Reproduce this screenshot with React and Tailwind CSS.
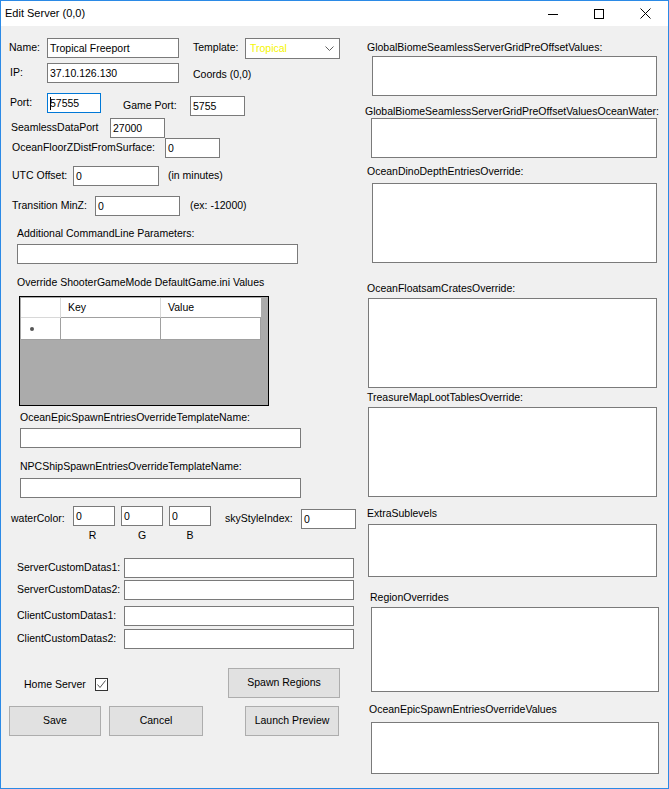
import React from "react";

// Simple label used next to the inputs
function Label({ className = "", children }) {
  return (
    <div className={"h-[20px] flex items-center whitespace-nowrap shrink-0 " + className}>
      {children}
    </div>
  );
}

function TextBox({ className = "", value = "", focused = false }) {
  return (
    <div
      className={
        "h-[20px] bg-white flex items-center pl-[2px] shrink-0 border " +
        (focused ? "border-[#0078d7] " : "border-[#7a7a7a] ") +
        className
      }
    >
      {focused && <span className="inline-block w-[1px] h-[13px] bg-black -mr-[1px]" />}
      <span className="leading-[14px]">{value}</span>
    </div>
  );
}

function Area({ className = "" }) {
  return <div className={"bg-white border border-[#7a7a7a] shrink-0 " + className} />;
}

function Button({ className = "", children }) {
  return (
    <div
      className={
        "h-[30px] bg-[#e1e1e1] border border-[#adadad] flex items-center justify-center shrink-0 " +
        className
      }
    >
      {children}
    </div>
  );
}

function TitleBar() {
  return (
    <div className="h-[25px] bg-white flex items-center shrink-0">
      <div className="pl-[4px] text-[11px] text-black flex-1">Edit Server (0,0)</div>
      <div className="w-[46px] h-full flex items-center justify-center">
        <svg width="10" height="10" viewBox="0 0 10 10">
          <line x1="0" y1="5.5" x2="10" y2="5.5" stroke="#000" strokeWidth="1" />
        </svg>
      </div>
      <div className="w-[46px] h-full flex items-center justify-center">
        <svg width="10" height="10" viewBox="0 0 10 10">
          <rect x="0.5" y="0.5" width="9" height="9" fill="none" stroke="#000" strokeWidth="1" />
        </svg>
      </div>
      <div className="w-[46px] h-full flex items-center justify-center">
        <svg width="11" height="11" viewBox="0 0 11 11">
          <path d="M0.5 0.5 L10.5 10.5 M10.5 0.5 L0.5 10.5" stroke="#000" strokeWidth="1" />
        </svg>
      </div>
    </div>
  );
}

function KeyValueGrid() {
  return (
    <div className="ml-[18px] mt-[7px] w-[250px] h-[110px] border border-black bg-[#ababab] p-[1px] shrink-0">
      {/* header */}
      <div className="flex h-[20px]">
        <div className="w-[40px] bg-white border-r border-b border-[#d8d8d8]" />
        <div className="w-[100px] bg-white border-r border-b border-[#d8d8d8] border-b-[#a0a0a0] flex items-center pl-[7px]">
          Key
        </div>
        <div className="w-[100px] bg-white border-b border-[#a0a0a0] flex items-center pl-[7px]">
          Value
        </div>
      </div>
      {/* new row */}
      <div className="flex h-[22px]">
        <div className="w-[40px] bg-white border-r border-b border-[#a0a0a0] flex items-center pl-[9px]">
          <span className="inline-block w-[4px] h-[4px] rounded-full bg-[#555]" />
        </div>
        <div className="w-[100px] bg-white border-r border-b border-[#a0a0a0]" />
        <div className="w-[100px] bg-white border-r border-b border-[#a0a0a0]" />
      </div>
    </div>
  );
}

function LeftColumn() {
  return (
    <div className="w-[359px] flex flex-col shrink-0">
      {/* Name / Template */}
      <div className="flex items-start mt-[12px] h-[21px]">
        <Label className="ml-[8px] w-[38px]">Name:</Label>
        <TextBox className="w-[132px]" value="Tropical Freeport" />
        <Label className="ml-[14px] w-[52px]">Template:</Label>
        <div className="w-[95px] h-[21px] bg-white border border-[#7a7a7a] flex items-center pl-[4px] pr-[5px]">
          <span className="flex-1 text-[#f5f500]">Tropical</span>
          <svg width="9" height="5" viewBox="0 0 9 5">
            <path d="M0.5 0.5 L4.5 4.5 L8.5 0.5" fill="none" stroke="#606060" strokeWidth="1" />
          </svg>
        </div>
      </div>

      {/* IP */}
      <div className="flex items-start mt-[4px] h-[22px]">
        <Label className="ml-[9px] w-[37px]">IP:</Label>
        <TextBox className="w-[132px]" value="37.10.126.130" />
        <Label className="ml-[14px] mt-[2px]">Coords (0,0)</Label>
      </div>

      {/* Ports */}
      <div className="flex items-start mt-[8px] h-[23px]">
        <Label className="ml-[9px] w-[37px]">Port:</Label>
        <TextBox className="w-[54px]" value="57555" focused />
        <Label className="ml-[22px] w-[67px] mt-[3px]">Game Port:</Label>
        <TextBox className="w-[55px] mt-[3px]" value="5755" />
      </div>

      <div className="flex items-start mt-[2px] h-[20px]">
        <Label className="ml-[10px] w-[99px]">SeamlessDataPort</Label>
        <TextBox className="w-[55px]" value="27000" />
      </div>

      <div className="flex items-start h-[20px]">
        <Label className="ml-[11px] w-[153px]">OceanFloorZDistFromSurface:</Label>
        <TextBox className="w-[55px]" value="0" />
      </div>

      <div className="flex items-start mt-[8px] h-[20px]">
        <Label className="ml-[11px] w-[61px]">UTC Offset:</Label>
        <TextBox className="w-[86px]" value="0" />
        <Label className="ml-[9px]">(in minutes)</Label>
      </div>

      <div className="flex items-start mt-[10px] h-[20px]">
        <Label className="ml-[11px] w-[83px]">Transition MinZ:</Label>
        <TextBox className="w-[85px]" value="0" />
        <Label className="ml-[10px]">(ex: -12000)</Label>
      </div>

      <div className="ml-[16px] mt-[10px] leading-[14px] h-[14px]">Additional CommandLine Parameters:</div>
      <TextBox className="ml-[16px] mt-[4px] w-[281px]" />

      <div className="ml-[16px] mt-[11px] leading-[14px] h-[14px]">Override ShooterGameMode DefaultGame.ini Values</div>
      <KeyValueGrid />

      <div className="ml-[19px] mt-[4px] leading-[14px] h-[14px]">OceanEpicSpawnEntriesOverrideTemplateName:</div>
      <TextBox className="ml-[19px] mt-[4px] w-[281px]" />

      <div className="ml-[19px] mt-[11px] leading-[14px] h-[14px]">NPCShipSpawnEntriesOverrideTemplateName:</div>
      <TextBox className="ml-[19px] mt-[5px] w-[281px]" />

      {/* water colour */}
      <div className="flex items-start mt-[8px] h-[36px]">
        <Label className="ml-[10px] w-[62px] mt-[3px]">waterColor:</Label>
        <div className="flex flex-col items-center w-[42px]">
          <TextBox className="w-[42px]" value="0" />
          <div className="mt-[2px] leading-[14px] pr-[3px]">R</div>
        </div>
        <div className="flex flex-col items-center w-[42px] ml-[6px]">
          <TextBox className="w-[42px]" value="0" />
          <div className="mt-[2px] leading-[14px]">G</div>
        </div>
        <div className="flex flex-col items-center w-[42px] ml-[6px]">
          <TextBox className="w-[42px]" value="0" />
          <div className="mt-[2px] leading-[14px]">B</div>
        </div>
        <Label className="ml-[14px] w-[76px] mt-[3px]">skyStyleIndex:</Label>
        <TextBox className="w-[55px] mt-[3px]" value="0" />
      </div>

      <div className="flex items-start mt-[16px] h-[20px]">
        <Label className="ml-[16px] w-[107px]">ServerCustomDatas1:</Label>
        <TextBox className="w-[230px]" />
      </div>
      <div className="flex items-start mt-[2px] h-[20px]">
        <Label className="ml-[16px] w-[107px]">ServerCustomDatas2:</Label>
        <TextBox className="w-[230px]" />
      </div>
      <div className="flex items-start mt-[6px] h-[20px]">
        <Label className="ml-[16px] w-[107px]">ClientCustomDatas1:</Label>
        <TextBox className="w-[230px]" />
      </div>
      <div className="flex items-start mt-[3px] h-[20px]">
        <Label className="ml-[16px] w-[107px]">ClientCustomDatas2:</Label>
        <TextBox className="w-[230px]" />
      </div>

      {/* home server + spawn regions */}
      <div className="flex items-start mt-[19px] h-[30px]">
        <div className="ml-[23px] w-[71px] mt-[9px] leading-[14px]">Home Server</div>
        <div className="mt-[10px] w-[13px] h-[13px] bg-white border border-[#333] flex items-center justify-center">
          <svg width="11" height="11" viewBox="0 0 11 11">
            <path d="M1.5 5.5 L4 8.5 L9.5 1.5" fill="none" stroke="#555" strokeWidth="1" />
          </svg>
        </div>
        <Button className="ml-[120px] w-[112px]">Spawn Regions</Button>
      </div>

      <div className="flex items-start mt-[8px] h-[30px]">
        <Button className="ml-[8px] w-[92px]">Save</Button>
        <Button className="ml-[8px] w-[94px]">Cancel</Button>
        <Button className="ml-[42px] w-[94px]">Launch Preview</Button>
      </div>
    </div>
  );
}

function RightColumn() {
  return (
    <div className="flex-1 flex flex-col">
      <div className="ml-[7px] mt-[14px] leading-[14px] h-[14px]">GlobalBiomeSeamlessServerGridPreOffsetValues:</div>
      <Area className="ml-[12px] mt-[2px] w-[285px] h-[40px]" />

      <div className="ml-[5px] mt-[8px] leading-[14px] h-[14px]">GlobalBiomeSeamlessServerGridPreOffsetValuesOceanWater:</div>
      <Area className="ml-[11px] w-[286px] h-[40px]" />

      <div className="ml-[7px] mt-[6px] leading-[14px] h-[14px]">OceanDinoDepthEntriesOverride:</div>
      <Area className="ml-[12px] mt-[5px] w-[285px] h-[80px]" />

      <div className="ml-[7px] mt-[18px] leading-[14px] h-[14px]">OceanFloatsamCratesOverride:</div>
      <Area className="ml-[8px] mt-[3px] w-[289px] h-[90px]" />

      <div className="ml-[7px] mt-[2px] leading-[14px] h-[14px]">TreasureMapLootTablesOverride:</div>
      <Area className="ml-[8px] mt-[3px] w-[289px] h-[90px]" />

      <div className="ml-[7px] mt-[9px] leading-[14px] h-[14px]">ExtraSublevels</div>
      <Area className="ml-[8px] mt-[4px] w-[289px] h-[53px]" />

      <div className="ml-[10px] mt-[13px] leading-[14px] h-[14px]">RegionOverrides</div>
      <Area className="ml-[11px] mt-[3px] w-[288px] h-[85px]" />

      <div className="ml-[9px] mt-[10px] leading-[14px] h-[14px]">OceanEpicSpawnEntriesOverrideValues</div>
      <Area className="ml-[11px] mt-[6px] w-[288px] h-[52px]" />
    </div>
  );
}

export default function App() {
  return (
    <div
      className="w-[669px] h-[789px] border border-[#2b8ae6] bg-[#f0f0f0] flex flex-col overflow-hidden text-black text-[10.5px]"
      style={{ fontFamily: '"Liberation Sans", Arial, sans-serif' }}
    >
      <TitleBar />
      <div className="flex flex-1">
        <LeftColumn />
        <RightColumn />
      </div>
    </div>
  );
}
